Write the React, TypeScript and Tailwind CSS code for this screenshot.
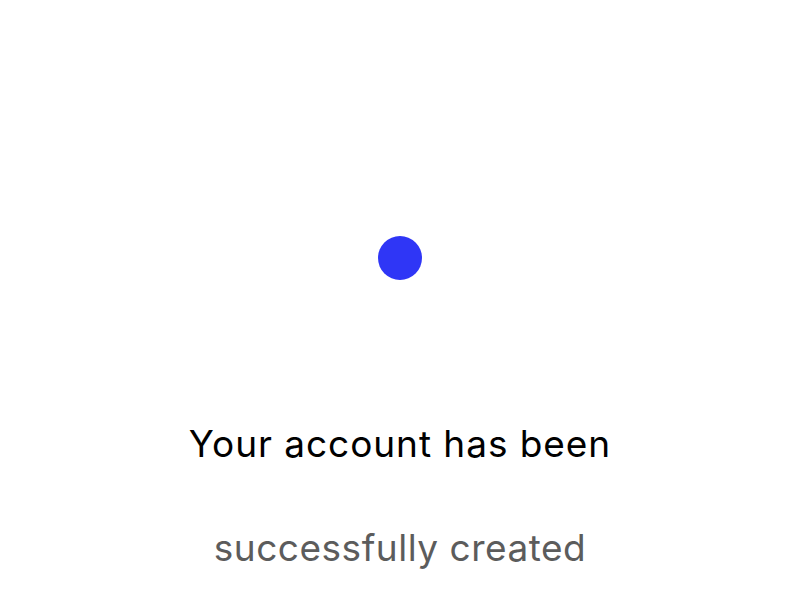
export default function App() {
  return (
    <div className="w-[800px] h-[600px] bg-white flex flex-col items-center font-['Inter',sans-serif]">
      <div className="mt-[236px] w-11 h-11 rounded-full bg-[#2f36f6]" />
      <p className="mt-[144px] text-[37px] leading-[40px] text-black tracking-[0.95px]">
        Your account has been
      </p>
      <p className="mt-[64px] text-[37px] leading-[40px] text-[#5c5c5c] tracking-[0.5px]">
        successfully created
      </p>
    </div>
  );
}
